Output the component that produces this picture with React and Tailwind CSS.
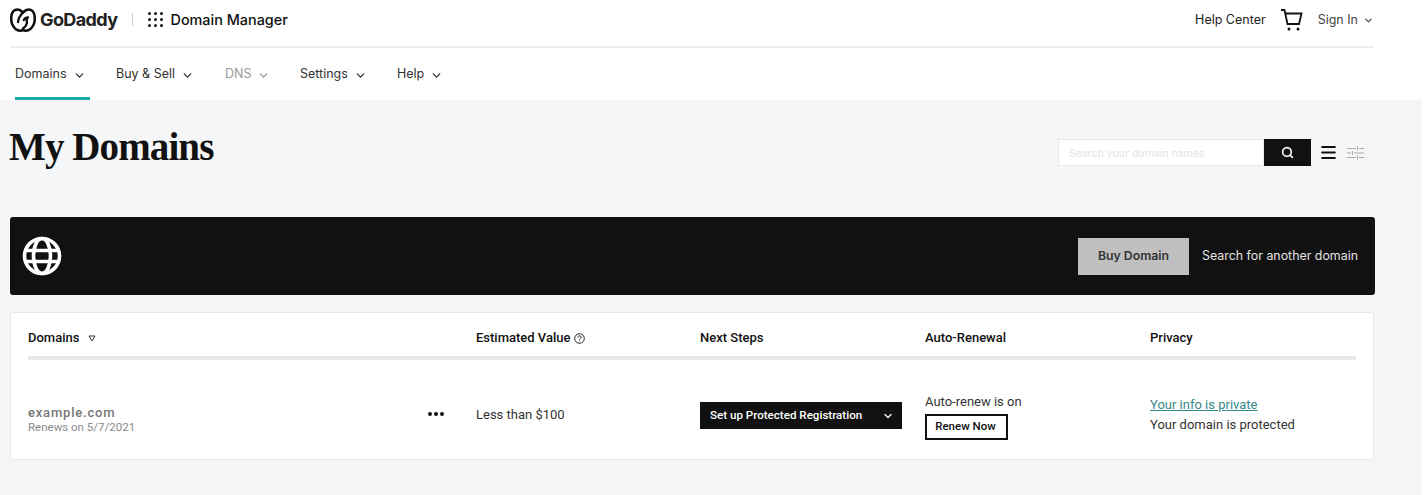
import { Search, ChevronDown, Menu } from "lucide-react";

const navItems = [
  { label: "Domains", active: true, width: "w-[75px]", gap: "mr-[26px]" },
  { label: "Buy & Sell", width: "w-[77px]", gap: "mr-[32px]" },
  { label: "DNS", muted: true, width: "w-[45px]", gap: "mr-[30px]" },
  { label: "Settings", width: "w-[67px]", gap: "mr-[30px]" },
  { label: "Help", width: "w-[45px]" },
];

const Logo = () => (
  <svg width="26" height="24" viewBox="0 0 26 24" fill="none" stroke="#111" strokeLinecap="round" strokeLinejoin="round">
    <path strokeWidth="2.600" d="M13 21.800c-1.500 1-3.500 1.100-5.200.5C4.200 21 1.600 16.500 1.300 12.500 1 8.500 1.500 4 4.800 2.200 7.500.8 10.700 2 13 4.500c2.300-2.500 5.500-3.700 8.200-2.300 3.300 1.800 3.800 6.300 3.500 10.300-.3 4-2.900 8.500-6.500 9.800-1.700.6-3.700.5-5.200-.5z" />
    <path strokeWidth="2.400" d="M13 4.500c-2.500 2.500-4.600 6-5 9.500M18 9.500c-1.800 0-3.300 1-4.200 2.500M16.800 10v5.500c-.5 2-2 3.800-3.800 5" />
  </svg>
);

const Dots = () => (
  <div className="grid grid-cols-3 gap-[3px]">
    {[0, 1, 2, 3, 4, 5, 6, 7, 8].map((dot) => (
      <span key={dot} className="h-[3px] w-[3px] rounded-full bg-[#111]" />
    ))}
  </div>
);

const Cart = () => (
  <svg width="24" height="24" viewBox="0 0 24 24" fill="none" stroke="#111" strokeWidth="1.800">
    <path d="M1 2h3.500l3 14h11.500l2.500-10.500H5.500" />
    <circle cx="9" cy="21" r="1.500" fill="#111" stroke="none" />
    <circle cx="18" cy="21" r="1.500" fill="#111" stroke="none" />
  </svg>
);

const Sliders = () => (
  <svg width="17" height="14" viewBox="0 0 17 14" fill="none" stroke="#a9abad" strokeWidth="1">
    <path d="M0 2.500h9M12 2.500h5M0 7h4M7 7h10M0 11.500h9M12 11.500h5M10.500 .5v4M5.500 5v4M10.500 9.500v4" />
  </svg>
);

const Globe = () => (
  <svg width="40" height="40" viewBox="0 0 40 40" fill="none" stroke="#fff" strokeWidth="3.600">
    <circle cx="20" cy="20" r="17.500" fill="#111" />
    <ellipse cx="20" cy="20" rx="8.500" ry="17.500" />
    <path d="M2.500 14.500h35M2.500 25.500h35" />
  </svg>
);

const Help = () => (
  <svg width="11" height="11" viewBox="0 0 11 11" fill="none" stroke="#222" strokeWidth="1">
    <circle cx="5.500" cy="5.500" r="4.800" />
    <path d="M3.800 4.400c0-1 .8-1.500 1.700-1.500s1.700.5 1.700 1.400c0 1.100-1.700 1.200-1.700 2.400M5.500 7.600v.8" />
  </svg>
);

const App = () => {
  return (
    <div className="h-[495px] w-[1424px] overflow-hidden bg-white font-['Inter',sans-serif] text-[#111]">
      <header className="h-[100px] bg-white">
        <div className="ml-[10px] flex h-[48px] w-[1364px] items-center border-b-2 border-[#eeeeee] pb-[7px]">
          <Logo />
          <span className="ml-[4px] text-[18px] font-bold tracking-[-0.6px] text-[#222]">GoDaddy</span>
          <span className="ml-[14px] h-[13px] w-px bg-[#cccccc]" />
          <div className="ml-[15px]">
            <Dots />
          </div>
          <span className="ml-[8px] text-[14.400px] font-medium text-[#111]">Domain Manager</span>
          <div className="ml-auto mt-[1px] flex items-center">
            <span className="text-[12.500px] text-[#222]">Help Center</span>
            <div className="ml-[14px]">
              <Cart />
            </div>
            <span className="ml-[14px] text-[12.500px] text-[#444]">Sign In</span>
            <ChevronDown className="ml-[5px] h-[11px] w-[11px] text-[#444]" strokeWidth={2.500} />
          </div>
        </div>
        <nav className="ml-[15px] flex h-[52px]">
          {navItems.map((item) => (
            <div
              key={item.label}
              className={`flex h-[52px] items-center ${item.width} ${item.gap || ""} ${item.active ? "border-b-[3px] border-[#1fa9a9] pt-[3px]" : ""}`}
            >
              <span className={`whitespace-nowrap text-[12.500px] ${item.muted ? "text-[#999999]" : "text-[#333333]"}`}>
                {item.label}
              </span>
              <ChevronDown className={`ml-[6px] mt-[3px] h-[13px] w-[13px] shrink-0 ${item.muted ? "text-[#999999]" : "text-[#333333]"}`} strokeWidth={2.500} />
            </div>
          ))}
        </nav>
      </header>

      <main className="h-[395px] w-[1422px] bg-[#f5f6f8]">
        <div className="flex h-[117px] w-[1364px] items-start justify-between pl-[9px]">
          <h1 className="mt-[24px] whitespace-nowrap font-['Liberation_Serif',serif] text-[39px] font-bold leading-[46px] tracking-[-0.9px] text-[#111]">
            My Domains
          </h1>
          <div className="mt-[39px] flex items-center">
            <div className="flex h-[27px] w-[206px] items-center border border-[#e8e8e8] bg-white pl-[10px] pt-[2px] text-[10.500px] text-[#e3e3e3]">
              Search your domain names
            </div>
            <div className="flex h-[27px] w-[47px] items-center justify-center bg-[#111]">
              <Search className="h-[13px] w-[13px] text-white" strokeWidth={3} />
            </div>
            <Menu className="ml-[8px] h-[19px] w-[19px] text-[#111]" strokeWidth={2.500} />
            <div className="ml-[9px]">
              <Sliders />
            </div>
          </div>
        </div>

        <div className="ml-[10px] flex h-[78px] w-[1365px] items-center rounded-[3px] bg-[#111] pl-[12px] pr-[17px]">
          <Globe />
          <div className="ml-auto flex h-[37px] w-[111px] items-center justify-center bg-[#bfbfbf] text-[12.300px] font-semibold text-[#333333]">
            Buy Domain
          </div>
          <span className="ml-[13px] text-[12.400px] text-[#e4e4e4]">Search for another domain</span>
        </div>

        <section className="ml-[10px] mt-[17px] h-[148px] w-[1364px] rounded-[3px] border border-[#e6e6e6] bg-white px-[17px] font-['Roboto',sans-serif]">
          <div className="grid h-[47px] grid-cols-[448px_224px_225px_225px_1fr] items-center border-b-4 border-[#e9e9e9] pt-[7px] text-[13px] font-medium text-[#111]">
            <div className="flex items-center">
              Domains
              <svg className="ml-[9px]" width="8" height="7" viewBox="0 0 8 7" fill="none" stroke="#333" strokeWidth="1">
                <path d="M1 1h6L4 6z" />
              </svg>
            </div>
            <div className="flex items-center gap-[4px]">
              Estimated Value
              <Help />
            </div>
            <div>Next Steps</div>
            <div>Auto-Renewal</div>
            <div>Privacy</div>
          </div>
          <div className="grid h-[97px] grid-cols-[448px_224px_225px_225px_1fr] items-center pt-[11px]">
            <div className="flex items-center justify-between pr-[32px]">
              <div className="mt-[11px]">
                <p className="text-[13px] font-medium leading-[15px] tracking-[0.8px] text-[#777777]">example.com</p>
                <p className="text-[11.500px] leading-[15px] text-[#8a8a8a]">Renews on 5/7/2021</p>
              </div>
              <div className="flex gap-[2px]">
                <span className="h-[4px] w-[4px] rounded-full bg-[#111]" />
                <span className="h-[4px] w-[4px] rounded-full bg-[#111]" />
                <span className="h-[4px] w-[4px] rounded-full bg-[#111]" />
              </div>
            </div>
            <div className="mt-[1px] text-[13px] text-[#333333]">Less than $100</div>
            <div className="mt-[3px]">
              <div className="flex h-[27px] w-[202px] items-center justify-between bg-[#111] pl-[10px] pr-[8px] text-[11.600px] font-medium text-white">
                Set up Protected Registration
                <ChevronDown className="h-[12px] w-[12px] text-white" strokeWidth={2.500} />
              </div>
            </div>
            <div className="mt-[5px]">
              <p className="text-[13px] leading-[16px] text-[#333333]">Auto-renew is on</p>
              <div className="mt-[4px] flex h-[26px] w-[83px] items-center justify-center border-2 border-[#111] pr-[2px] text-[11.500px] font-medium text-[#111]">
                Renew Now
              </div>
            </div>
            <div className="mt-[1px]">
              <a className="block text-[13px] leading-[20px] text-[#35888a] underline">Your info is private</a>
              <p className="text-[13px] leading-[19px] text-[#333333]">Your domain is protected</p>
            </div>
          </div>
        </section>
      </main>
    </div>
  );
};

export default App;
